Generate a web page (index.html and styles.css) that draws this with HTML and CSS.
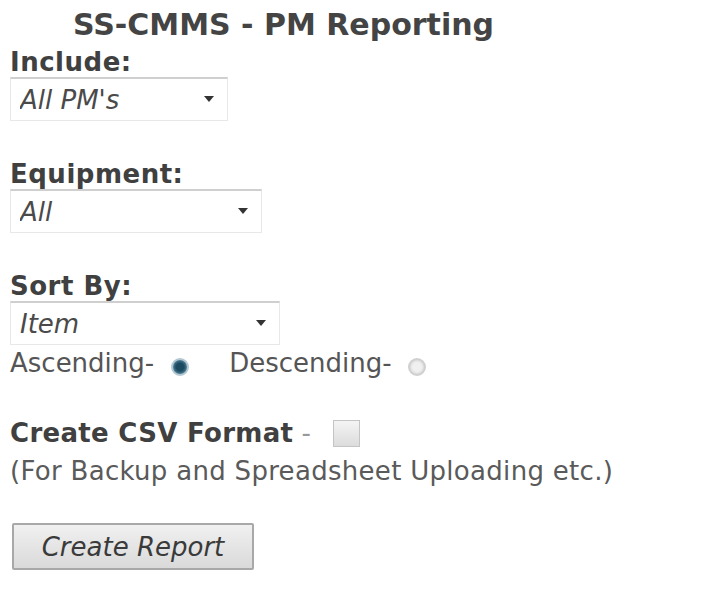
FILE: index.html
```html
<!DOCTYPE html>
<html>
<head>
<meta charset="utf-8">
<link rel="stylesheet" href="styles.css">
</head>
<body>
<form class="page">
  <h1 class="title">SS-CMMS - PM Reporting</h1>

  <div class="field">
    <label class="label">Include:</label>
    <span class="select-wrap w-include">
      <select class="select"><option>All PM's</option></select>
      <span class="arrow"></span>
    </span>
  </div>

  <div class="field">
    <label class="label">Equipment:</label>
    <span class="select-wrap w-equip">
      <select class="select"><option>All</option></select>
      <span class="arrow"></span>
    </span>
  </div>

  <div class="field last">
    <label class="label">Sort By:</label>
    <span class="select-wrap w-sort">
      <select class="select"><option>Item</option></select>
      <span class="arrow"></span>
    </span>
  </div>

  <div class="order-row">
    <span class="opt">Ascending-</span><input class="radio first" type="radio" name="order" checked>
    <span class="opt desc">Descending-</span><input class="radio second" type="radio" name="order">
  </div>

  <div class="csv-row">
    <span class="csv-label">Create CSV Format</span><span class="dash"> - </span><input class="check" type="checkbox">
  </div>
  <div class="note">(For Backup and Spreadsheet Uploading etc.)</div>

  <button class="btn" type="button">Create Report</button>
</form>
</body>
</html>
```

FILE: styles.css
```css
html, body {
  margin: 0;
  padding: 0;
  background: #ffffff;
}

.page {
  padding-left: 10px;
  font-family: "DejaVu Sans", Verdana, sans-serif;
  color: #4a4a4a;
}

.title {
  margin: 0 0 0 63px;
  font-size: 30px;
  line-height: 49px;
  font-weight: bold;
  color: #444;
}

.field {
  display: flex;
  flex-direction: column;
  align-items: flex-start;
  margin-bottom: 40px;
}

.field.last {
  margin-bottom: 5px;
}

.label {
  font-size: 26px;
  line-height: 26px;
  font-weight: bold;
  letter-spacing: 0.5px;
  color: #404040;
  margin-bottom: 2px;
}

.select-wrap {
  position: relative;
  display: block;
  height: 44px;
}

.w-include { width: 218px; }
.w-equip { width: 252px; }
.w-sort { width: 270px; }

.select {
  appearance: none;
  -webkit-appearance: none;
  width: 100%;
  height: 44px;
  margin: 0;
  padding: 0 0 0 9px;
  border: 1px solid #e8e8e8;
  border-top: 2px solid #cfcfcf;
  background: #fff;
  font-family: "DejaVu Sans", Verdana, sans-serif;
  font-style: italic;
  font-size: 26px;
  color: #4a4a4a;
  outline: none;
}

.arrow {
  position: absolute;
  right: 14px;
  top: 19px;
  width: 0;
  height: 0;
  border-left: 5px solid transparent;
  border-right: 5px solid transparent;
  border-top: 6px solid #333;
}

.order-row {
  display: flex;
  align-items: center;
  height: 26px;
  font-size: 26px;
  line-height: 26px;
  color: #555;
}

.opt.desc {
  margin-left: 40px;
}

.radio {
  appearance: none;
  -webkit-appearance: none;
  flex: 0 0 auto;
  box-sizing: border-box;
  width: 18px;
  height: 18px;
  margin: 8px 0 0 17px;
  border-radius: 50%;
  border: 2px solid #d0d0d0;
  background: radial-gradient(circle, #f0f0f0 0 45%, #d8d8d8 75%);
}

.radio.second {
  margin-left: 16px;
}

.radio:checked {
  border-color: #b4c8d2;
  background: radial-gradient(circle, #1c4a60 0 38%, #3a6c84 60%, #8fb0c0 90%);
}

.csv-row {
  display: flex;
  align-items: center;
  margin-top: 44px;
  height: 26px;
  font-size: 26px;
  line-height: 26px;
}

.csv-label {
  font-weight: bold;
  letter-spacing: 0.3px;
  color: #404040;
}

.dash {
  color: #999;
  white-space: pre;
}

.check {
  appearance: none;
  -webkit-appearance: none;
  flex: 0 0 auto;
  box-sizing: border-box;
  width: 27px;
  height: 27px;
  margin: 0 0 0 14px;
  border: 1px solid #c4c4c4;
  background: linear-gradient(#f4f4f4, #dcdcdc);
}

.note {
  font-size: 26px;
  line-height: 26px;
  margin-top: 12px;
  letter-spacing: 0.3px;
  color: #5a5a5a;
}

.btn {
  display: block;
  margin: 39px 0 0 2px;
  width: 242px;
  height: 47px;
  padding: 0;
  border: 2px solid #a8a8a8;
  border-radius: 2px;
  background: linear-gradient(#f0f0f0, #dadada);
  font-family: "DejaVu Sans", Verdana, sans-serif;
  font-style: italic;
  font-size: 26px;
  color: #3a3a3a;
}
```
